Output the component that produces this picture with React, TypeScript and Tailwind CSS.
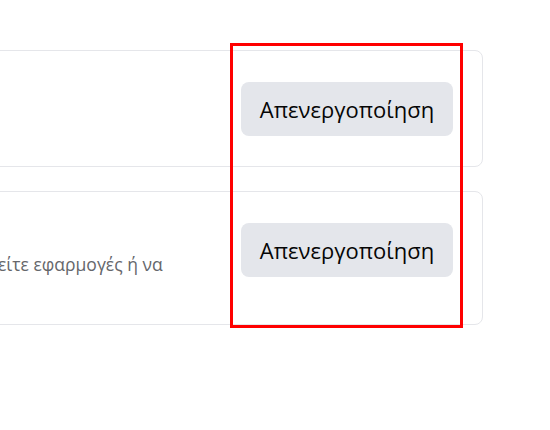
import React from 'react';

const font = { fontFamily: '"Open Sans", "Noto Sans", sans-serif' };

type Row = {
  title: string;
  description: string;
};

const rows: Row[] = [
  {
    title: 'Σύνδεση με το Facebook',
    description: 'Συνδεθείτε σε εφαρμογές και ιστότοπους με το Facebook.',
  },
  {
    title: 'Εφαρμογές, ιστότοποι και παιχνίδια',
    description:
      'Αν απενεργοποιήσετε αυτή τη ρύθμιση, δεν θα μπορείτε να χρησιμοποιείτε εφαρμογές ή να παίζετε παιχνίδια με το Facebook.',
  },
];

const SettingCard = ({ row }: { row: Row }) => (
  <div className="flex items-start gap-6 rounded-lg border border-[#e5e6ea] bg-white pl-[31px] pr-[29px] pt-[31px] pb-[30px]">
    <div className="flex-1 min-w-0">
      <div className="mb-[9px] text-[17px] leading-[22px] font-semibold text-[#050505]">
        {row.title}
      </div>
      <p className="max-w-[760px] text-[17.5px] leading-[20px] text-[#65676b]">{row.description}</p>
    </div>
    <button className="h-[54px] w-[212px] shrink-0 rounded-lg bg-[#e4e6eb] text-[22px] font-medium text-[#050505]">
      Απενεργοποίηση
    </button>
  </div>
);

export default function App() {
  return (
    <div className="relative h-[430px] w-[550px] overflow-hidden bg-white" style={font}>
      <div className="ml-[-622px] mr-[67px] pt-[50px] flex flex-col gap-6">
        {rows.map((r, i) => (
          <SettingCard key={i} row={r} />
        ))}
      </div>

      {/* highlight box */}
      <div className="pointer-events-none absolute left-[230px] top-[43px] h-[285px] w-[233px] border-[3px] border-[#ff0000]" />
    </div>
  );
}
